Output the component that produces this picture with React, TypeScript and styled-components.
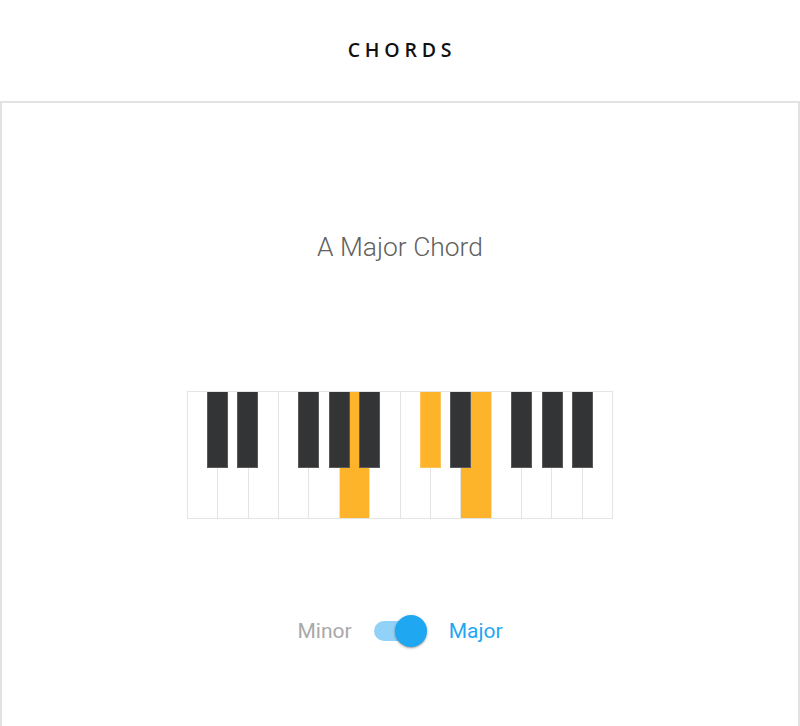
import React, { useState } from "react";
import styled, { createGlobalStyle } from "styled-components";

const GlobalStyle = createGlobalStyle`
  html, body {
    margin: 0;
    padding: 0;
    background: #fff;
  }
  body {
    font-family: Roboto, "Liberation Sans", sans-serif;
  }
`;

const WHITE_COUNT = 14;
const KEY_W = 30.43;

/* white notes of two octaves, C to B */
const WHITE_NOTES = ["C", "D", "E", "F", "G", "A", "B", "C2", "D2", "E2", "F2", "G2", "A2", "B2"];
/* black keys sit on the boundary after the white key of that index */
const BLACK_KEYS = [
  { note: "C#", at: 1 },
  { note: "D#", at: 2 },
  { note: "F#", at: 4 },
  { note: "G#", at: 5 },
  { note: "A#", at: 6 },
  { note: "C#2", at: 8 },
  { note: "D#2", at: 9 },
  { note: "F#2", at: 11 },
  { note: "G#2", at: 12 },
  { note: "A#2", at: 13 },
];

const CHORDS: Record<string, string[]> = {
  major: ["A", "C#2", "E2"],
  minor: ["A", "C2", "E2"],
};

const Page = styled.div`
  display: flex;
  flex-direction: column;
  min-height: 726px;
`;

const Header = styled.header`
  height: 101px;
  display: flex;
  align-items: center;
  justify-content: center;
  border-bottom: 2px solid #e2e2e2;
`;

const Logo = styled.h1`
  margin: 0 0 2px 4px;
  font-family: "Open Sans", sans-serif;
  font-size: 19.5px;
  font-weight: 600;
  letter-spacing: 4.8px;
  color: #111;
`;

const Main = styled.main`
  flex: 1;
  display: flex;
  flex-direction: column;
  align-items: center;
  border-left: 2px solid #e2e2e2;
  border-right: 2px solid #e2e2e2;
  padding-top: 126px;
`;

const Title = styled.h2`
  margin: 0;
  font-size: 26.4px;
  font-weight: 300;
  color: #616161;
  line-height: 36px;
`;

const Piano = styled.div`
  position: relative;
  margin-top: 126px;
  width: ${WHITE_COUNT * KEY_W}px;
  height: 128px;
  display: flex;
  border: 1px solid #e4e4e4;
  box-sizing: border-box;
`;

const WhiteKey = styled.div<{ $on: boolean }>`
  flex: 1;
  background: ${(p) => (p.$on ? "#fdb42a" : "#fff")};
  border-left: 1px solid #e4e4e4;
  &:first-child {
    border-left: none;
  }
`;

const BlackKey = styled.div<{ $on: boolean; $at: number }>`
  position: absolute;
  top: 0;
  left: ${(p) => p.$at * KEY_W - 11.5}px;
  width: 21px;
  height: 76px;
  box-sizing: border-box;
  background: ${(p) => (p.$on ? "#fdb42a" : "#333435")};
  border: 1px solid ${(p) => (p.$on ? "#fcc35a" : "#5a5a5a")};
  border-top: none;
`;

const Controls = styled.div`
  margin-top: 94px;
  display: flex;
  align-items: center;
  gap: 22px;
  font-size: 21px;
`;

const Label = styled.span<{ $active: boolean }>`
  color: ${(p) => (p.$active ? "#1fa7f2" : "#a8a8a8")};
  cursor: pointer;
`;

const Switch = styled.button<{ $on: boolean }>`
  position: relative;
  width: 53px;
  height: 36px;
  padding: 0;
  border: 0;
  background: none;
  cursor: pointer;
`;

const Track = styled.span<{ $on: boolean }>`
  position: absolute;
  left: 0;
  top: 8px;
  width: 51px;
  height: 20px;
  border-radius: 10px;
  background: ${(p) => (p.$on ? "#92d2f8" : "#c8c8c8")};
`;

const Thumb = styled.span<{ $on: boolean }>`
  position: absolute;
  top: 2px;
  left: ${(p) => (p.$on ? "21px" : "-2px")};
  width: 32px;
  height: 32px;
  border-radius: 50%;
  background: ${(p) => (p.$on ? "#1fa7f2" : "#f5f5f5")};
  box-shadow: 0 1px 3px rgba(0, 0, 0, 0.3), 0 1px 1px rgba(0, 0, 0, 0.14);
`;

const App: React.FC = () => {
  const [major, setMajor] = useState(true);
  const notes = CHORDS[major ? "major" : "minor"];

  return (
    <Page>
      <GlobalStyle />
      <Header>
        <Logo>CHORDS</Logo>
      </Header>
      <Main>
        <Title>A {major ? "Major" : "Minor"} Chord</Title>
        <Piano>
          {WHITE_NOTES.map((n) => (
            <WhiteKey key={n} $on={notes.includes(n)} />
          ))}
          {BLACK_KEYS.map((k) => (
            <BlackKey key={k.note} $at={k.at} $on={notes.includes(k.note)} />
          ))}
        </Piano>
        <Controls>
          <Label $active={!major} onClick={() => setMajor(false)}>
            Minor
          </Label>
          <Switch $on={major} onClick={() => setMajor(!major)} aria-label="toggle">
            <Track $on={major} />
            <Thumb $on={major} />
          </Switch>
          <Label $active={major} onClick={() => setMajor(true)}>
            Major
          </Label>
        </Controls>
      </Main>
    </Page>
  );
};

export default App;
